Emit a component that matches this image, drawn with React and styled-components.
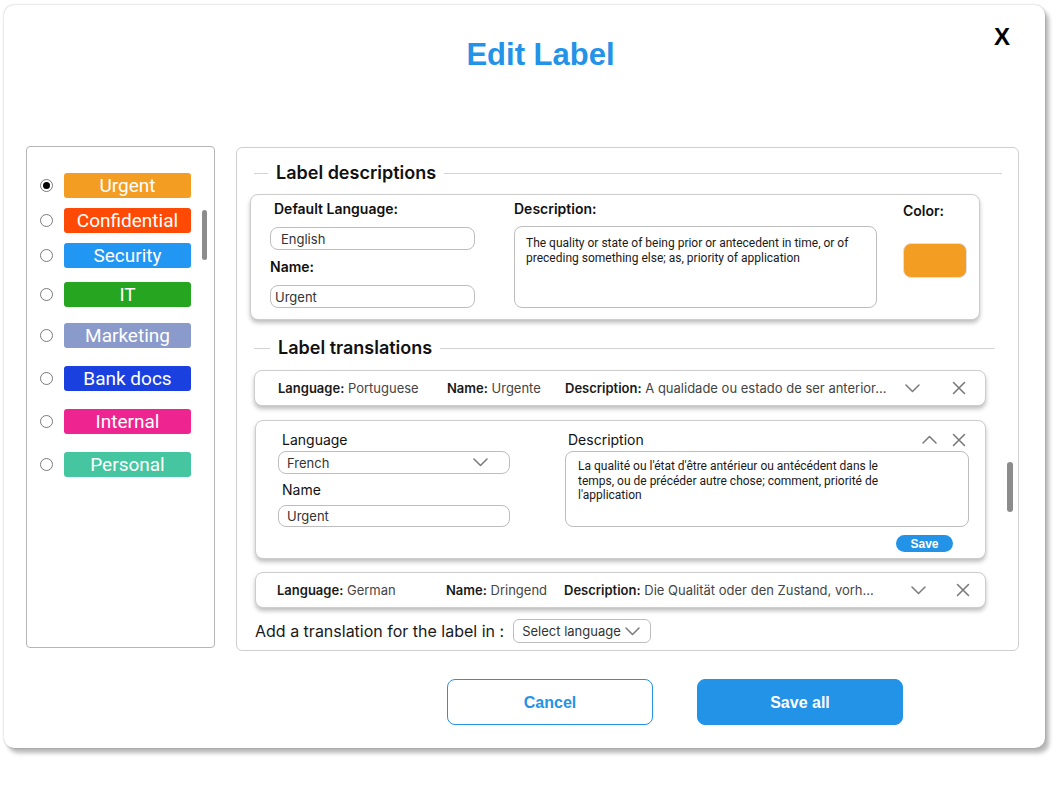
import styled, { createGlobalStyle } from "styled-components"

const GlobalStyle = createGlobalStyle`
  html, body {
    margin: 0;
    padding: 0;
    background: #fff;
  }
  body {
    font-family: Inter, "Noto Sans", sans-serif;
    color: #111;
  }
  * {
    box-sizing: border-box;
  }
`

const Page = styled.div`
  width: 1058px;
  height: 807px;
  padding: 5px 0 0 4px;
`

const Dialog = styled.div`
  position: relative;
  width: 1041px;
  height: 743px;
  background: #fff;
  border-radius: 10px;
  box-shadow: 0 0 2px rgba(0, 0, 0, 0.3), 4px 5px 4px rgba(0, 0, 0, 0.28);
  display: flex;
  flex-direction: column;
  padding: 32px 26px 0 22px;
`

const Title = styled.h1`
  margin: 0;
  padding-left: 36px;
  text-align: center;
  font-family: "Liberation Sans", Arial, sans-serif;
  font-weight: 700;
  font-size: 31px;
  line-height: 36px;
  color: #2393e8;
`

const CloseButton = styled.button`
  position: absolute;
  top: 20px;
  right: 35px;
  border: none;
  background: none;
  padding: 0;
  font-family: "Liberation Sans", Arial, sans-serif;
  font-weight: 700;
  font-size: 24px;
  line-height: 24px;
  color: #000;
  cursor: pointer;
`

const Content = styled.div`
  display: flex;
  align-items: flex-start;
  gap: 21px;
  margin-top: 73px;
`

/* left column: label picker */

const LabelList = styled.div`
  position: relative;
  width: 189px;
  height: 502px;
  border: 1px solid #b5b5b5;
  border-radius: 4px;
  padding: 26px 0 0 13px;
  display: flex;
  flex-direction: column;
`

const LabelRow = styled.label`
  display: flex;
  align-items: center;
  gap: 11px;
  margin-top: ${(p) => p.$gap}px;
  cursor: pointer;
`

const Radio = styled.span`
  width: 13px;
  height: 13px;
  flex: none;
  border-radius: 50%;
  border: 1px solid #7a7a7a;
  background: #fff;
  display: flex;
  align-items: center;
  justify-content: center;

  &::after {
    content: "";
    width: 7px;
    height: 7px;
    border-radius: 50%;
    background: ${(p) => (p.$checked ? "#000" : "transparent")};
  }
`

const Chip = styled.span`
  width: 127px;
  height: 25px;
  border-radius: 3px;
  background: ${(p) => p.$color};
  color: #fff;
  font-family: Roboto, "Liberation Sans", sans-serif;
  font-size: 19px;
  line-height: 25px;
  text-align: center;
`

const ScrollThumb = styled.div`
  position: absolute;
  top: ${(p) => p.$top}px;
  right: ${(p) => p.$right}px;
  width: ${(p) => p.$w}px;
  height: 50px;
  border-radius: 3px;
  background: #8c8c8c;
`

/* right column: editor */

const Editor = styled.div`
  position: relative;
  width: 783px;
  height: 504px;
  margin-top: 1px;
  border: 1px solid #cfcfcf;
  border-radius: 6px;
  padding: 13px 16px 0 13px;
  display: flex;
  flex-direction: column;
`

const SectionHeader = styled.div`
  display: flex;
  align-items: center;
  gap: 8px;
  margin: ${(p) => p.$mt}px ${(p) => p.$mr}px 0 4px;
  height: 22px;

  &::before {
    content: "";
    width: ${(p) => p.$lead}px;
    height: 1px;
    background: #d4d4d4;
  }
  &::after {
    content: "";
    flex: 1;
    height: 1px;
    background: #d4d4d4;
  }

  h2 {
    margin: 0;
    font-size: 18px;
    font-weight: 600;
    line-height: 22px;
    color: #111;
  }
`

const Card = styled.div`
  background: #fff;
  border: 1px solid #cdcdcd;
  border-radius: 8px;
  box-shadow: 0 3px 4px rgba(0, 0, 0, 0.25);
`

const DescriptionCard = styled(Card)`
  width: 730px;
  height: 126px;
  margin-top: 10px;
  padding: 5px 12px 0 19px;
  display: flex;
`

const Column = styled.div`
  width: ${(p) => p.$w}px;
  margin-left: ${(p) => p.$ml || 0}px;
  display: flex;
  flex-direction: column;
`

const FieldLabel = styled.div`
  font-size: 14px;
  line-height: 17px;
  font-weight: ${(p) => (p.$bold ? 600 : 400)};
  color: #111;
  margin-top: ${(p) => p.$mt || 0}px;
  margin-left: ${(p) => p.$ml || 0}px;
`

const TextBox = styled.div`
  height: ${(p) => p.$h}px;
  margin-top: ${(p) => p.$mt || 0}px;
  border: 1px solid #bdbdbd;
  border-radius: 8px;
  padding: 0 ${(p) => p.$pr || 8}px 0 ${(p) => p.$pl}px;
  display: flex;
  align-items: center;
  justify-content: space-between;
  font-size: 13px;
  color: #333;
`

const TextArea = styled.div`
  height: ${(p) => p.$h}px;
  margin-top: ${(p) => p.$mt}px;
  border: 1px solid #bdbdbd;
  border-radius: 8px;
  padding: ${(p) => p.$pt}px 8px 0 ${(p) => p.$pl}px;
  font-family: Roboto, "Liberation Sans", sans-serif;
  font-size: 12px;
  line-height: 14.5px;
  color: #1a1a1a;
  white-space: nowrap;
  overflow: hidden;
`

const Swatch = styled.div`
  width: 64px;
  height: 35px;
  margin-top: 24px;
  border-radius: 8px;
  border: 1px solid #e0e0e0;
  background: ${(p) => p.$color};
`

const TransRow = styled(Card)`
  width: ${(p) => p.$w}px;
  height: 36px;
  margin: ${(p) => p.$mt}px 0 0 ${(p) => p.$ml}px;
  padding: 0 ${(p) => p.$pr}px 0 ${(p) => p.$pl}px;
  display: flex;
  align-items: center;
`

const Field = styled.div`
  width: ${(p) => (p.$w ? `${p.$w}px` : "auto")};
  flex: ${(p) => (p.$w ? "none" : 1)};
  font-size: 13px;
  color: #444;
  white-space: nowrap;
  overflow: hidden;

  b {
    font-weight: 600;
    color: #1a1a1a;
  }
`

const IconGroup = styled.div`
  display: flex;
  align-items: center;
  gap: ${(p) => p.$gap}px;
`

const IconButton = styled.button`
  width: ${(p) => p.$size || 24}px;
  height: 20px;
  padding: 0;
  border: none;
  background: none;
  display: flex;
  align-items: center;
  justify-content: center;
  cursor: pointer;
`

const ExpandedCard = styled(Card)`
  width: 731px;
  height: 139px;
  margin: 14px 0 0 5px;
  padding: 10px 16px 0 22px;
  display: grid;
  grid-template-columns: 232px 404px;
  column-gap: 55px;
`

const ColumnHead = styled.div`
  display: flex;
  align-items: center;
  justify-content: space-between;
  height: 17px;
`

const SmallSave = styled.button`
  align-self: flex-end;
  width: 57px;
  height: 17px;
  margin: 8px 16px 0 0;
  border: none;
  border-radius: 9px;
  background: #2393e8;
  color: #fff;
  font-family: "Liberation Sans", Arial, sans-serif;
  font-weight: 700;
  font-size: 12px;
  padding: 0;
`

const AddRow = styled.div`
  display: flex;
  align-items: center;
  gap: 9px;
  margin: 11px 0 0 5px;
  font-size: 16px;
  color: #1a1a1a;
`

const SelectBox = styled.div`
  width: 138px;
  height: 24px;
  border: 1px solid #bdbdbd;
  border-radius: 6px;
  padding: 0 10px 0 8px;
  display: flex;
  align-items: center;
  justify-content: space-between;
  font-size: 13px;
  color: #333;
`

/* footer */

const Footer = styled.div`
  display: flex;
  gap: 44px;
  margin-top: 28px;
  padding-left: 421px;
`

const Button = styled.button`
  width: 206px;
  height: 46px;
  border-radius: 8px;
  border: 1px solid #2393e8;
  background: ${(p) => (p.$primary ? "#2393e8" : "#fff")};
  color: ${(p) => (p.$primary ? "#fff" : "#2393e8")};
  font-family: "Liberation Sans", Arial, sans-serif;
  font-weight: 700;
  font-size: 16px;
  padding-top: 2px;
  cursor: pointer;
`

const Chevron = ({ up }) => (
  <svg width="15" height="9" viewBox="0 0 15 9" fill="none">
    <path
      d={up ? "M1 8 L7.5 1.5 L14 8" : "M1 1 L7.5 7.5 L14 1"}
      stroke="#7a7a7a"
      strokeWidth="1.5"
      strokeLinecap="round"
      strokeLinejoin="round"
    />
  </svg>
)

const Cross = () => (
  <svg width="14" height="14" viewBox="0 0 14 14" fill="none">
    <path d="M1.5 1.5 L12.5 12.5 M12.5 1.5 L1.5 12.5" stroke="#7a7a7a" strokeWidth="1.6" strokeLinecap="round" />
  </svg>
)

const labels = [
  { name: "Urgent", color: "#f39e23", gap: 0, checked: true },
  { name: "Confidential", color: "#fe4a05", gap: 10 },
  { name: "Security", color: "#2196f3", gap: 10 },
  { name: "IT", color: "#26a520", gap: 14 },
  { name: "Marketing", color: "#8a9acb", gap: 16 },
  { name: "Bank docs", color: "#1a40e0", gap: 18 },
  { name: "Internal", color: "#ee2590", gap: 18 },
  { name: "Personal", color: "#45c6a0", gap: 18 },
]

const TranslationRow = ({ language, name, description, mt, ml, w, pl, pr, iconGap }) => (
  <TransRow $mt={mt} $ml={ml} $w={w} $pl={pl} $pr={pr}>
    <Field $w={169}>
      <b>Language:</b> {language}
    </Field>
    <Field $w={118}>
      <b>Name:</b> {name}
    </Field>
    <Field>
      <b>Description:</b> {description}
    </Field>
    <IconGroup $gap={iconGap}>
      <IconButton>
        <Chevron />
      </IconButton>
      <IconButton>
        <Cross />
      </IconButton>
    </IconGroup>
  </TransRow>
)

export default function App() {
  return (
    <Page>
      <GlobalStyle />
      <Dialog>
        <Title>Edit Label</Title>
        <CloseButton>X</CloseButton>

        <Content>
          <LabelList>
            {labels.map((l) => (
              <LabelRow key={l.name} $gap={l.gap}>
                <Radio $checked={l.checked} />
                <Chip $color={l.color}>{l.name}</Chip>
              </LabelRow>
            ))}
            <ScrollThumb $top={63} $right={7} $w={5} />
          </LabelList>

          <Editor>
            <SectionHeader $mt={1} $mr={0} $lead={14}>
              <h2>Label descriptions</h2>
            </SectionHeader>

            <DescriptionCard>
              <Column $w={205}>
                <FieldLabel $bold $ml={4}>
                  Default Language:
                </FieldLabel>
                <TextBox $h={23} $mt={10} $pl={10}>
                  English
                </TextBox>
                <FieldLabel $bold $mt={8}>
                  Name:
                </FieldLabel>
                <TextBox $h={23} $mt={10} $pl={4}>
                  Urgent
                </TextBox>
              </Column>
              <Column $w={363} $ml={39}>
                <FieldLabel $bold>Description:</FieldLabel>
                <TextArea $h={82} $mt={9} $pt={9} $pl={11}>
                  The quality or state of being prior or antecedent in time, or of
                  <br />
                  preceding something else; as, priority of application
                </TextArea>
              </Column>
              <Column $w={64} $ml={26}>
                <FieldLabel $bold $mt={2}>
                  Color:
                </FieldLabel>
                <Swatch $color="#f39e23" />
              </Column>
            </DescriptionCard>

            <SectionHeader $mt={17} $mr={7} $lead={16}>
              <h2>Label translations</h2>
            </SectionHeader>

            <TranslationRow
              language="Portuguese"
              name="Urgente"
              description="A qualidade ou estado de ser anterior..."
              mt={11}
              ml={4}
              w={732}
              pl={23}
              pr={14}
              iconGap={23}
            />

            <ExpandedCard>
              <Column>
                <FieldLabel $ml={4}>Language</FieldLabel>
                <TextBox $h={23} $mt={3} $pl={8} $pr={21}>
                  French
                  <Chevron />
                </TextBox>
                <FieldLabel $ml={4} $mt={7}>
                  Name
                </FieldLabel>
                <TextBox $h={22} $mt={7} $pl={8}>
                  Urgent
                </TextBox>
              </Column>
              <Column>
                <ColumnHead>
                  <FieldLabel $ml={3}>Description</FieldLabel>
                  <IconGroup $gap={10}>
                    <IconButton $size={20}>
                      <Chevron up />
                    </IconButton>
                    <IconButton $size={20}>
                      <Cross />
                    </IconButton>
                  </IconGroup>
                </ColumnHead>
                <TextArea $h={76} $mt={3} $pt={7} $pl={12}>
                  La qualité ou l'état d'être antérieur ou antécédent dans le
                  <br />
                  temps, ou de précéder autre chose; comment, priorité de
                  <br />
                  l'application
                </TextArea>
                <SmallSave>Save</SmallSave>
              </Column>
            </ExpandedCard>

            <TranslationRow
              language="German"
              name="Dringend"
              description="Die Qualität oder den Zustand, vorh..."
              mt={13}
              ml={5}
              w={731}
              pl={21}
              pr={10}
              iconGap={21}
            />

            <AddRow>
              Add a translation for the label in :
              <SelectBox>
                Select language
                <Chevron />
              </SelectBox>
            </AddRow>

            <ScrollThumb $top={314} $right={5} $w={6} />
          </Editor>
        </Content>

        <Footer>
          <Button>Cancel</Button>
          <Button $primary>Save all</Button>
        </Footer>
      </Dialog>
    </Page>
  )
}
